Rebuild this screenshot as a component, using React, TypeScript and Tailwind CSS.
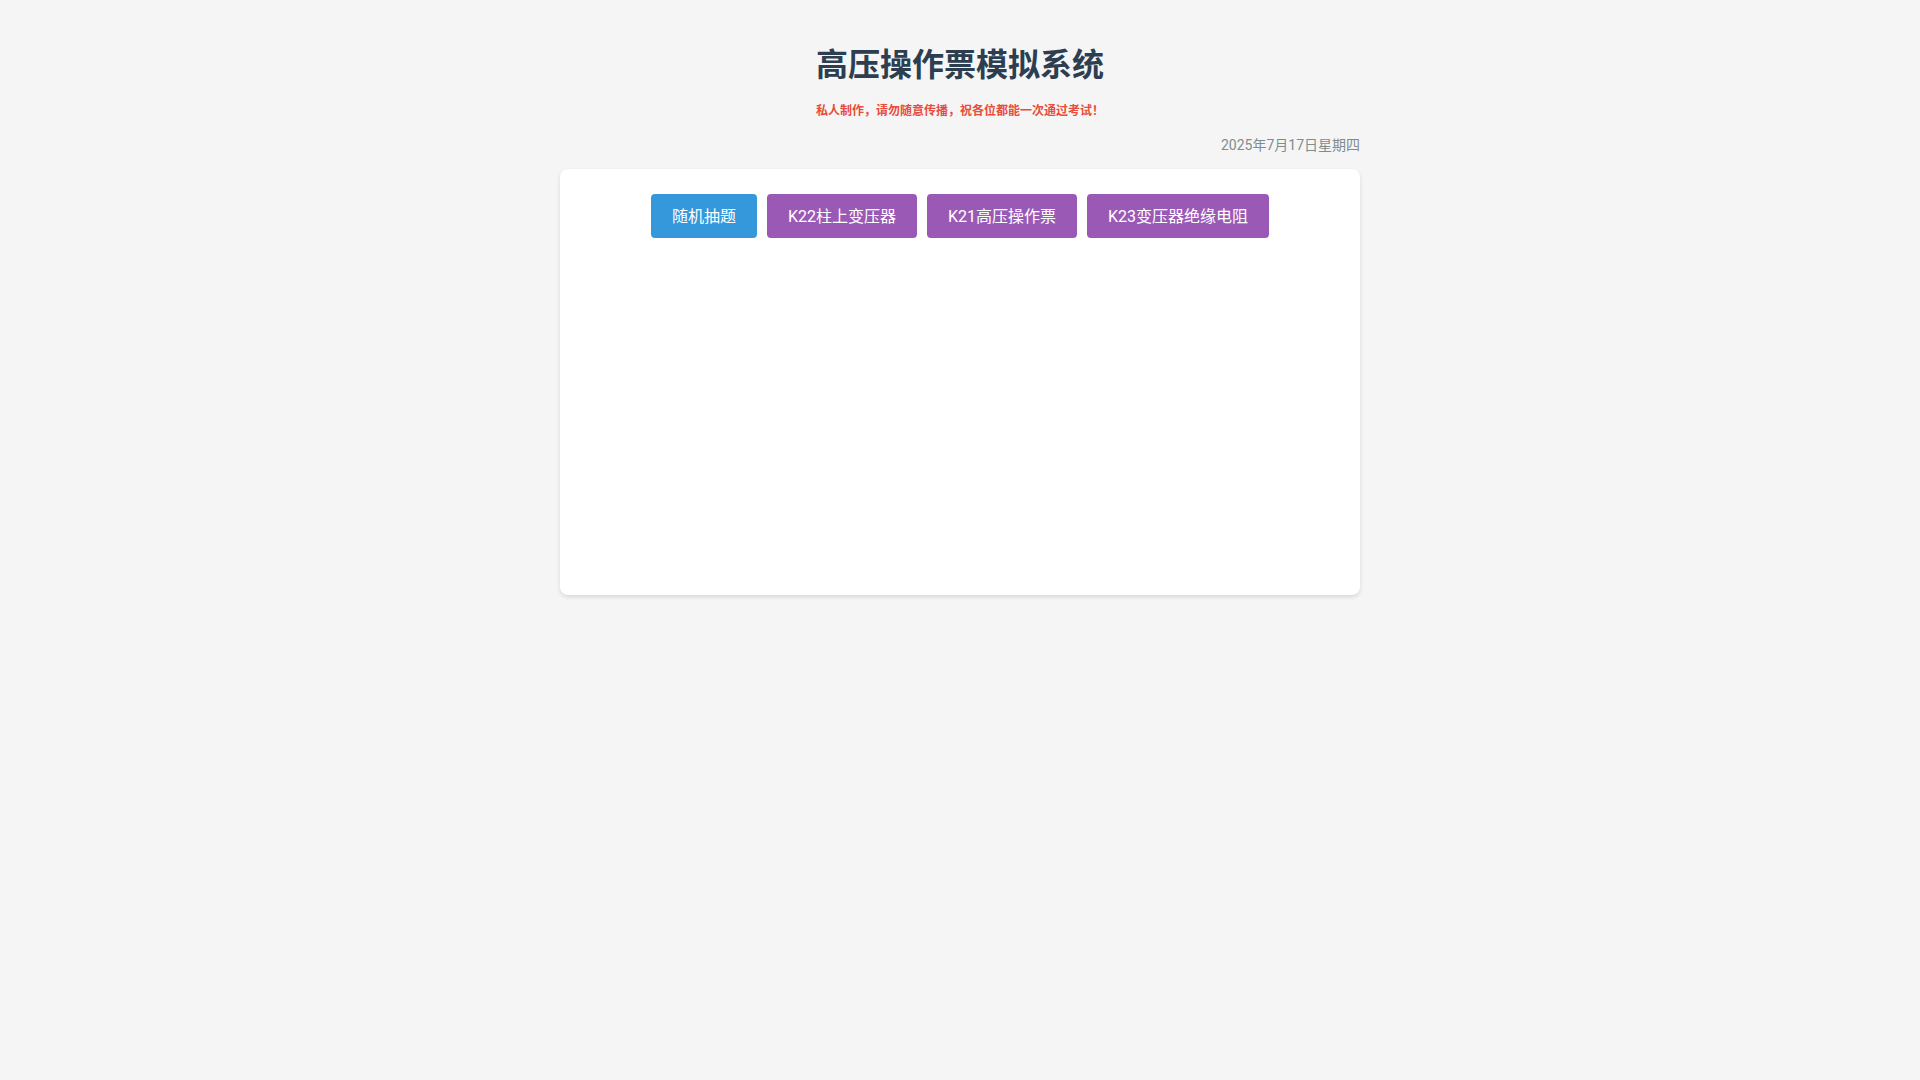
import React from 'react';

const font = { fontFamily: 'Roboto, "Noto Sans CJK SC", sans-serif' };

const buttons = [
  { label: '随机抽题', color: 'bg-[#3498db]' },
  { label: 'K22柱上变压器', color: 'bg-[#9b59b6]' },
  { label: 'K21高压操作票', color: 'bg-[#9b59b6]' },
  { label: 'K23变压器绝缘电阻', color: 'bg-[#9b59b6]' },
];

export default function App() {
  return (
    <div className="min-h-screen bg-[#f5f5f5]" style={font}>
      <div className="mx-auto w-[800px] pt-[45px]">
        <h1 className="text-center text-[32px] leading-[40px] font-bold text-[#2c3e50]">
          高压操作票模拟系统
        </h1>
        <p className="mt-[17px] text-center text-[12px] leading-[18px] font-bold text-[#e74c3c]">
          私人制作，请勿随意传播，祝各位都能一次通过考试！
        </p>
        <div className="mt-[15px] text-right text-[14px] leading-[20px] text-[#7f8c8d]">
          2025年7月17日星期四
        </div>
        <div className="mt-[14px] h-[426px] rounded-lg bg-white pt-[25px] shadow-[0_2px_4px_rgba(0,0,0,0.12)]">
          <div className="flex justify-center gap-[10px]">
            {buttons.map((b) => (
              <button
                key={b.label}
                className={`${b.color} h-[44px] rounded px-[21px] pt-[2px] text-[16px] text-white cursor-pointer`}
              >
                {b.label}
              </button>
            ))}
          </div>
        </div>
      </div>
    </div>
  );
}
